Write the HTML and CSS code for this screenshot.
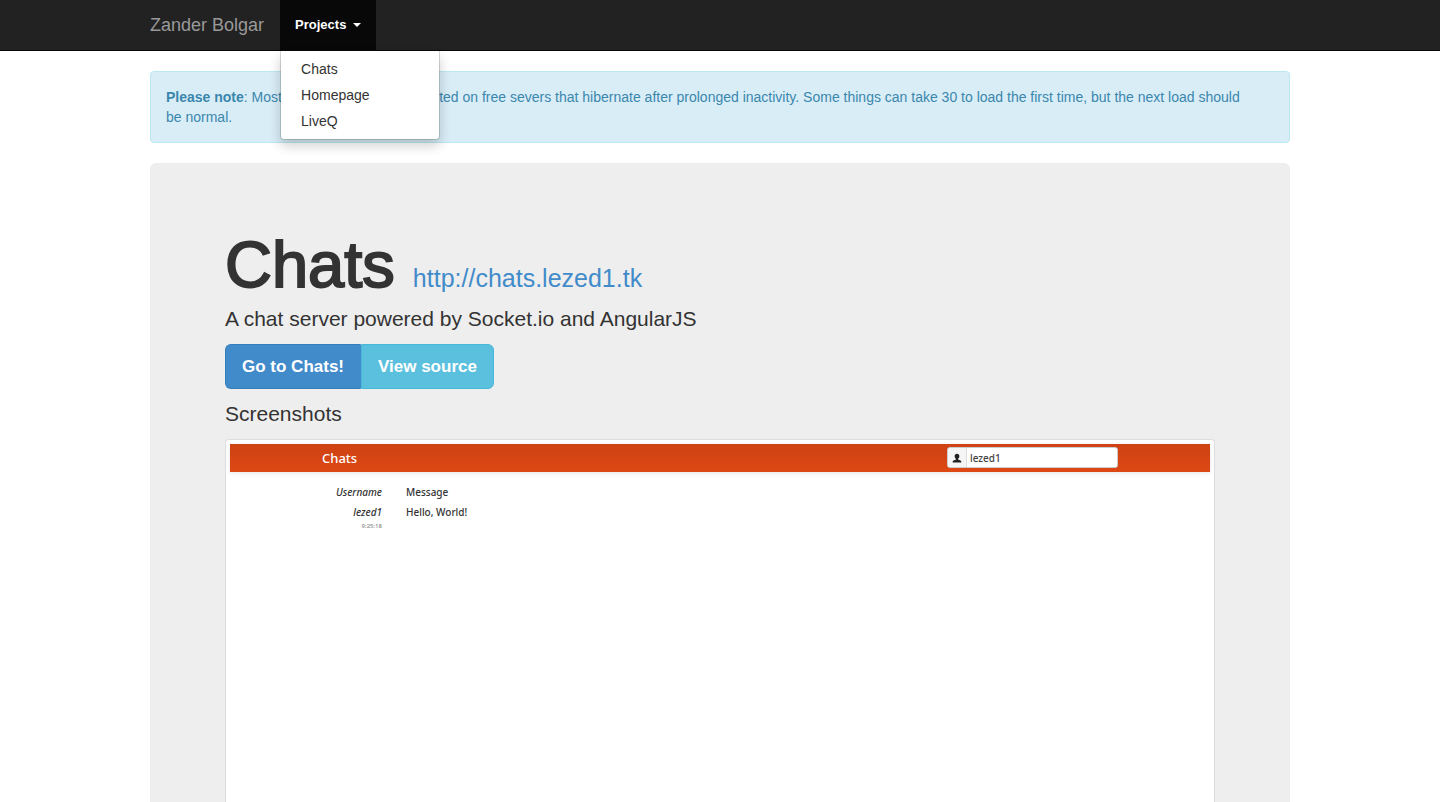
FILE: index.html
```html
<!DOCTYPE html>
<html lang="en">
<head>
<meta charset="utf-8">
<meta name="viewport" content="width=device-width, initial-scale=1">
<title>Zander Bolgar</title>
<link rel="stylesheet" href="styles.css">
</head>
<body>
<nav class="navbar">
  <div class="container navbar-inner">
    <a class="brand" href="#">Zander Bolgar</a>
    <div class="dropdown">
      <button class="dropdown-toggle" type="button" aria-expanded="true">Projects <span class="caret"></span></button>
      <ul class="dropdown-menu">
        <li><a href="#">Chats</a></li>
        <li><a href="#">Homepage</a></li>
        <li><a href="#">LiveQ</a></li>
      </ul>
    </div>
  </div>
</nav>
<main class="container main">
  <div class="alert"><strong>Please note</strong>: Most of these projects are hosted on free severs that hibernate after prolonged inactivity. Some things can take 30 to load the first time, but the next load should be&nbsp;normal.</div>
  <section class="jumbotron">
    <h1 class="title">Chats <a class="title-link" href="#">http://chats.lezed1.tk</a></h1>
    <p class="lead">A chat server powered by Socket.io and AngularJS</p>
    <div class="btn-group">
      <a class="btn btn-primary" href="#">Go to Chats!</a>
      <a class="btn btn-info" href="#">View source</a>
    </div>
    <p class="lead">Screenshots</p>
    <div class="thumbnail">
      <div class="shot-bar">
        <span class="shot-brand">Chats</span>
        <label class="shot-user">
          <span class="shot-addon"><svg class="user-icon" viewBox="0 0 16 16" role="img" aria-label="Username"><path d="M8 1C5.600 1 4.200 2.600 4.200 4.800C4.200 6.800 5.200 8.300 6.200 9.100V10.400C4.500 11.300 1 11.800 1 14V15H15V14C15 11.800 11.500 11.300 9.800 10.400V9.100C10.800 8.300 11.800 6.800 11.800 4.800C11.800 2.600 10.400 1 8 1Z"/></svg></span>
          <input class="shot-input" type="text" value="lezed1">
        </label>
      </div>
      <div class="shot-messages">
        <span class="shot-name">Username</span><span>Message</span>
        <span class="shot-name">lezed1</span><span>Hello, World!</span>
        <time class="shot-time">9:25:18</time>
      </div>
    </div>
  </section>
</main>
</body>
</html>
```

FILE: styles.css
```css
* { box-sizing: border-box; }

body {
  margin: 0;
  min-height: 100vh;
  display: flex;
  flex-direction: column;
  background: #fff;
  color: #333;
  font: 14px/20px "Liberation Sans", Arial, sans-serif;
}

a { text-decoration: none; }

.container {
  width: 100%;
  max-width: 1170px;
  margin: 0 auto;
  padding: 0 15px;
}

.navbar {
  background: #222;
  border-bottom: 1px solid #080808;
}

.navbar-inner { display: flex; }

.brand {
  padding: 15px 16px 15px 0;
  color: #999;
  font-size: 18px;
}

.dropdown { position: relative; }

.dropdown-toggle {
  display: flex;
  align-items: center;
  gap: 7px;
  height: 50px;
  padding: 0 15px;
  border: 0;
  background: #080808;
  color: #fff;
  font: bold 13px/20px "Liberation Sans", Arial, sans-serif;
}

.caret {
  border: 4px solid transparent;
  border-top-color: #fff;
  border-bottom: 0;
}

.dropdown-menu {
  position: absolute;
  top: 100%;
  left: 0;
  z-index: 1;
  min-width: 160px;
  margin: 1px 0 0;
  padding: 5px 0;
  list-style: none;
  background: #fff;
  background-clip: padding-box;
  border: 1px solid rgba(0, 0, 0, 0.15);
  border-top: 0;
  border-radius: 0 0 4px 4px;
  box-shadow: 0 6px 12px rgba(0, 0, 0, 0.18);
}

.dropdown-menu a {
  display: block;
  padding: 3px 20px;
  color: #333;
}

.main {
  flex: 1;
  display: flex;
  flex-direction: column;
  gap: 20px;
  padding-top: 20px;
}

.alert {
  padding: 15px;
  color: #3a87ad;
  background: #d9edf7;
  border: 1px solid #bce8f1;
  border-radius: 4px;
}

.jumbotron {
  flex: 1;
  display: flex;
  flex-direction: column;
  align-items: flex-start;
  gap: 10px;
  padding: 73px 75px 0;
  background: #eee;
  border-radius: 6px 6px 0 0;
}

.title {
  margin: 0;
  font-size: 65px;
  font-weight: normal;
  line-height: 58px;
  -webkit-text-stroke: 2px #333;
}

.title-link {
  color: #428bca;
  font-size: 25px;
  line-height: 24px;
  -webkit-text-stroke: 0;
}

.lead {
  margin: 0;
  font-size: 21px;
  line-height: 30px;
}

.btn-group { display: flex; }

.btn {
  padding: 11px 16px 10px;
  border: 1px solid #357ebd;
  color: #fff;
  font-size: 17px;
  font-weight: bold;
  line-height: 22px;
}

.btn-primary {
  background: #428bca;
  border-right-color: #428bca;
  border-radius: 6px 0 0 6px;
}

.btn-info {
  background: #5bc0de;
  border-color: #46b8da;
  border-radius: 0 6px 6px 0;
}

.thumbnail {
  flex: 1;
  align-self: stretch;
  padding: 4px 4px 0;
  background: #fff;
  border: 1px solid #ddd;
  border-bottom: 0;
  border-radius: 4px 4px 0 0;
  font: 500 10px/20px "Noto Sans", sans-serif;
}

.shot-bar {
  display: flex;
  align-items: center;
  justify-content: space-between;
  height: 28px;
  padding: 0 92px 1px;
  background: linear-gradient(#ce4213, #dd4814);
  box-shadow: 0 1px 5px rgba(0, 0, 0, 0.1);
}

.shot-brand {
  color: #fff;
  font-size: 13px;
}

.shot-user {
  display: flex;
  width: 171px;
  height: 21px;
  overflow: hidden;
  background: #fff;
  border: 1px solid #ccc;
  border-radius: 3px;
}

.shot-addon {
  display: flex;
  align-items: center;
  padding: 0 4px;
  background: #f5f5f5;
  border-right: 1px solid #ddd;
}

.user-icon {
  width: 10px;
  height: 10px;
  fill: #222;
}

.shot-input {
  flex: 1;
  min-width: 0;
  padding: 0 3px;
  border: 0;
  color: #444;
  font: 500 10px/18px "Noto Sans", sans-serif;
}

.shot-messages {
  display: grid;
  grid-template-columns: 152px 1fr;
  column-gap: 24px;
  padding-top: 10px;
}

.shot-name {
  text-align: right;
  font-style: italic;
}

.shot-time {
  color: #888;
  font-size: 6px;
  line-height: 8px;
  text-align: right;
}
```
